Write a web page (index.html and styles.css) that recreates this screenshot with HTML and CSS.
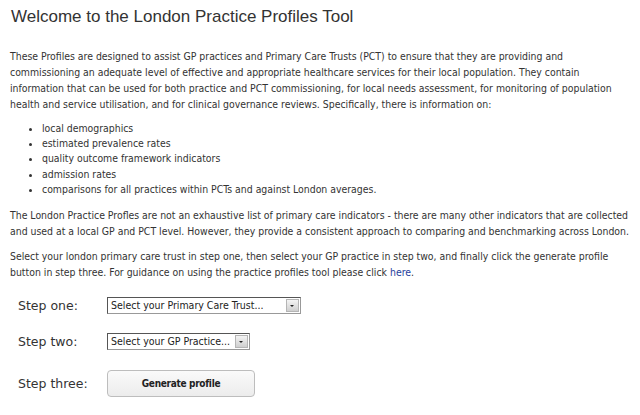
FILE: index.html
```html
<!DOCTYPE html>
<html lang="en">
<head>
  <meta charset="UTF-8" />
  <title>London Practice Profiles</title>
  <link rel="stylesheet" href="styles.css">
</head>
<body>
  <div class="page">
    <h1>Welcome to the London Practice Profiles Tool</h1>

    <p class="intro">These Profiles are designed to assist GP practices and Primary Care Trusts (PCT) to ensure that they are providing and commissioning an adequate level of effective and appropriate healthcare services for their local population. They contain information that can be used for both practice and PCT commissioning, for local needs assessment, for monitoring of population health and service utilisation, and for clinical governance reviews. Specifically, there is information on:</p>

    <ul>
      <li>local demographics</li>
      <li>estimated prevalence rates</li>
      <li>quality outcome framework indicators</li>
      <li>admission rates</li>
      <li>comparisons for all practices within PCTs and against London averages.</li>
    </ul>

    <p>The London Practice Profles are not an exhaustive list of primary care indicators - there are many other indicators that are collected and used at a local GP and PCT level. However, they provide a consistent approach to comparing and benchmarking across London.</p>

    <p>Select your london primary care trust in step one, then select your GP practice in step two, and finally click the generate profile button in step three. For guidance on using the practice profiles tool please click <a href="#">here</a>.</p>

    <div class="steps">
      <div class="step">
        <span class="step-label">Step one:</span>
        <span class="picker">
          <select class="pct">
            <option>Select your Primary Care Trust...</option>
          </select>
        </span>
      </div>
      <div class="step">
        <span class="step-label">Step two:</span>
        <span class="picker">
          <select class="practice">
            <option>Select your GP Practice...</option>
          </select>
        </span>
      </div>
      <div class="step step-last">
        <span class="step-label">Step three:</span>
        <button class="btn">Generate profile</button>
      </div>
    </div>
  </div>
</body>
</html>
```

FILE: styles.css
```css
body {
  margin: 0;
  background: #fff;
  color: #333;
  font-family: "DejaVu Sans Condensed", "DejaVu Sans", Verdana, sans-serif;
  font-size: 10.4px;
}
.page {
  padding: 6px 0 0 10px;
}
h1 {
  font-family: "Liberation Sans", Arial, sans-serif;
  font-weight: normal;
  font-size: 17px;
  line-height: 22px;
  margin: 0 0 20px 1px;
  color: #333;
}
p {
  margin: 0 0 9px 0;
  line-height: 16px;
}
.intro {
  margin-right: 12px;
}
ul {
  margin: 0 0 10px 0;
  padding-left: 32px;
  list-style: disc;
}
li {
  line-height: 15.2px;
}
a {
  color: #1f3e9c;
  text-decoration: none;
}
.steps {
  margin-top: 16px;
  padding-left: 8px;
}
.step {
  display: flex;
  align-items: center;
  height: 18px;
  margin-bottom: 18px;
}
.step-last {
  height: 27px;
  margin-top: 20px;
}
.step-label {
  width: 89px;
  font-family: "DejaVu Sans", Verdana, sans-serif;
  font-size: 12.5px;
  color: #333;
}
.picker {
  position: relative;
  display: inline-block;
}
.picker select {
  appearance: none;
  -webkit-appearance: none;
  font-family: "DejaVu Sans Condensed", "DejaVu Sans", sans-serif;
  font-size: 10.5px;
  color: #222;
  height: 17px;
  padding: 0 18px 0 3px;
  border: 1px solid #999;
  border-top-color: #555;
  border-left-color: #555;
  border-radius: 0;
  background: #fff;
}
.pct {
  width: 194px;
}
.practice {
  width: 143px;
}
.picker::after {
  content: "";
  position: absolute;
  right: 2px;
  top: 2px;
  width: 13px;
  height: 13px;
  background: linear-gradient(#f4f4f4, #cfcfcf);
  border: 1px solid #b5b5b5;
  box-sizing: border-box;
  pointer-events: none;
}
.picker::before {
  content: "";
  position: absolute;
  right: 7px;
  top: 8px;
  border-left: 2px solid transparent;
  border-right: 2px solid transparent;
  border-top: 2px solid #222;
  z-index: 1;
}
.btn {
  width: 148px;
  height: 27px;
  font-family: "DejaVu Sans Condensed", "DejaVu Sans", sans-serif;
  font-size: 10px;
  letter-spacing: -0.3px;
  font-weight: bold;
  color: #222;
  background: linear-gradient(#fafafa, #ececec);
  border: 1px solid #bdbdbd;
  border-radius: 4px;
  cursor: pointer;
}
```
